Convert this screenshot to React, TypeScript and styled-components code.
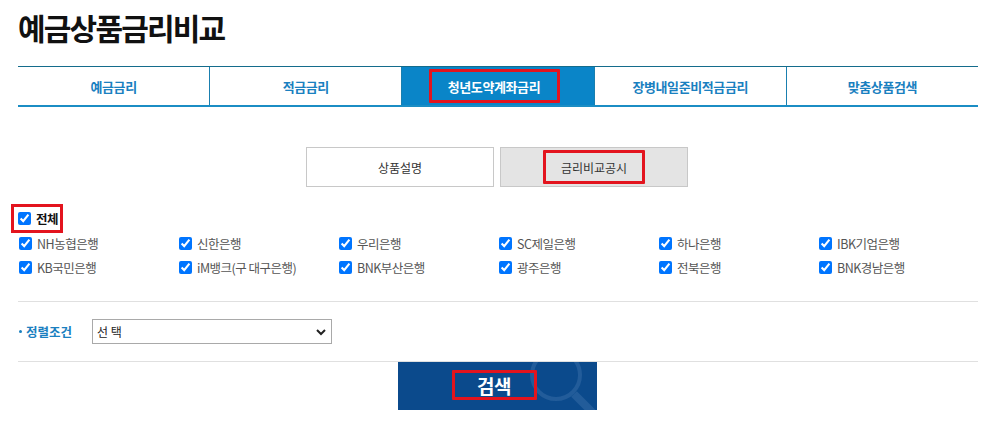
import React from "react";
import styled, { createGlobalStyle } from "styled-components";

const Global = createGlobalStyle`
  html, body { margin: 0; padding: 0; background: #fff; }
  body { font-family: "Noto Sans CJK KR", "Noto Sans", sans-serif; color: #333; }
  * { box-sizing: border-box; }
`;

const Page = styled.div`
  width: 997px;
  padding: 0 19px 0 18px;
`;

const Title = styled.h1`
  margin: 0;
  padding-top: 6px;
  height: 66px;
  font-size: 30px;
  font-weight: 700;
  letter-spacing: -1.8px;
  color: #111;
  line-height: 42px;
`;

const Tabs = styled.div`
  display: flex;
  border-top: 1px solid #146c8c;
  border-bottom: 2px solid #1b8dc4;
  height: 41px;
`;

const Tab = styled.div<{ $active?: boolean; $first?: boolean }>`
  flex: 1;
  display: flex;
  align-items: center;
  justify-content: center;
  border-left: ${(p) => (p.$first ? "none" : "1px solid #1a7faf")};
  background: ${(p) => (p.$active ? "#0a85c8" : "#fff")};
  color: ${(p) => (p.$active ? "#fff" : "#1a80c0")};
  font-size: 13px;
  font-weight: 700;
  letter-spacing: -0.4px;
`;

const Mark = styled.span<{ $w: number; $h: number; $shift?: number }>`
  position: relative;
  left: ${(p) => p.$shift ?? 0}px;
  display: inline-flex;
  align-items: center;
  justify-content: center;
  width: ${(p) => p.$w}px;
  height: ${(p) => p.$h}px;
  border: 3px solid #e3141e;
  border-radius: 1px;
`;

const SubTabs = styled.div`
  display: flex;
  justify-content: center;
  gap: 6px;
  margin-top: 40px;
  margin-left: -2px;
`;

const SubTab = styled.div<{ $active?: boolean }>`
  width: 188px;
  height: 40px;
  display: flex;
  align-items: center;
  justify-content: center;
  border: 1px solid #c8c8c8;
  background: ${(p) => (p.$active ? "#e4e4e4" : "#fff")};
  font-size: 12px;
  color: #333;
`;

const AllRow = styled.div`
  margin-top: 17px;
  margin-left: -7px;
  height: 29px;
  display: flex;
  align-items: center;
`;

const AllMark = styled.span`
  display: inline-flex;
  align-items: center;
  width: 52px;
  height: 29px;
  padding-left: 4px;
  border: 3px solid #e3141e;
`;

const AllLabel = styled.label`
  display: flex;
  align-items: center;
  gap: 5px;
  font-size: 12.5px;
  font-weight: 700;
  letter-spacing: -0.5px;
  color: #111;
  white-space: nowrap;
`;

const Check = styled.input.attrs({ type: "checkbox" })`
  width: 13px;
  height: 13px;
  margin: 0;
  accent-color: #0075ff;
`;

const BankGrid = styled.div`
  display: grid;
  grid-template-columns: repeat(6, 160px);
  row-gap: 10px;
  margin-top: 3px;
  padding-left: 1px;
`;

const Bank = styled.label`
  display: flex;
  align-items: center;
  gap: 5px;
  height: 14px;
  font-size: 12.5px;
  color: #555;
  letter-spacing: -0.5px;
  white-space: nowrap;
`;

const Divider = styled.div`
  height: 1px;
  background: #e0e0e0;
`;

const SortDivider = styled(Divider)`
  margin-top: 27px;
`;

const SortRow = styled.div`
  display: flex;
  align-items: center;
  height: 59px;
`;

const SortLabel = styled.div`
  width: 74px;
  display: flex;
  align-items: center;
  gap: 4px;
  color: #1a80c0;
  font-size: 12.5px;
  font-weight: 700;
  &::before {
    content: "";
    width: 3px;
    height: 3px;
    border-radius: 50%;
    background: #1a80c0;
    margin-left: 1px;
  }
`;

const Select = styled.div`
  width: 240px;
  height: 25px;
  border: 1px solid #a9a9a9;
  display: flex;
  align-items: center;
  justify-content: space-between;
  padding: 0 4px 0 4px;
  font-size: 12px;
  color: #222;
`;

const ButtonWrap = styled.div`
  display: flex;
  justify-content: center;
  margin-left: -2px;
`;

const SearchButton = styled.div`
  position: relative;
  width: 199px;
  height: 48px;
  background: #0b4a8c;
  overflow: hidden;
  display: flex;
  align-items: center;
  justify-content: center;
  padding-right: 6px;
  padding-bottom: 2px;
`;

const SearchText = styled.span`
  color: #fff;
  font-size: 19px;
  font-weight: 700;
  letter-spacing: -0.5px;
`;

const Deco = styled.svg`
  position: absolute;
  left: 120px;
  top: -20px;
`;

const banks = [
  "NH농협은행",
  "신한은행",
  "우리은행",
  "SC제일은행",
  "하나은행",
  "IBK기업은행",
  "KB국민은행",
  "iM뱅크(구 대구은행)",
  "BNK부산은행",
  "광주은행",
  "전북은행",
  "BNK경남은행",
];

export default function App() {
  return (
    <Page>
      <Global />
      <Title>예금상품금리비교</Title>
      <Tabs>
        <Tab $first>예금금리</Tab>
        <Tab>적금금리</Tab>
        <Tab $active>
          <Mark $w={131} $h={34} $shift={-4}>청년도약계좌금리</Mark>
        </Tab>
        <Tab>장병내일준비적금금리</Tab>
        <Tab>맞춤상품검색</Tab>
      </Tabs>
      <SubTabs>
        <SubTab>상품설명</SubTab>
        <SubTab $active>
          <Mark $w={102} $h={34}>금리비교공시</Mark>
        </SubTab>
      </SubTabs>
      <AllRow>
        <AllMark>
          <AllLabel>
            <Check defaultChecked />
            전체
          </AllLabel>
        </AllMark>
      </AllRow>
      <BankGrid>
        {banks.map((b) => (
          <Bank key={b}>
            <Check defaultChecked />
            {b}
          </Bank>
        ))}
      </BankGrid>
      <SortDivider />
      <SortRow>
        <SortLabel>정렬조건</SortLabel>
        <Select>
          <span>선 택</span>
          <svg width="12" height="12" viewBox="0 0 12 12">
            <path d="M2 4 L6 8 L10 4" fill="none" stroke="#222" strokeWidth="2" />
          </svg>
        </Select>
      </SortRow>
      <Divider />
      <ButtonWrap>
        <SearchButton>
          <Deco width="100" height="90" viewBox="0 0 100 90">
            <circle cx="38" cy="33" r="24" fill="none" stroke="#2c64a0" strokeWidth="4" opacity="0.7" />
            <path d="M56 52 L82 78" stroke="#2c64a0" strokeWidth="8" opacity="0.7" />
          </Deco>
          <Mark $w={85} $h={30}>
            <SearchText>검색</SearchText>
          </Mark>
        </SearchButton>
      </ButtonWrap>
    </Page>
  );
}
